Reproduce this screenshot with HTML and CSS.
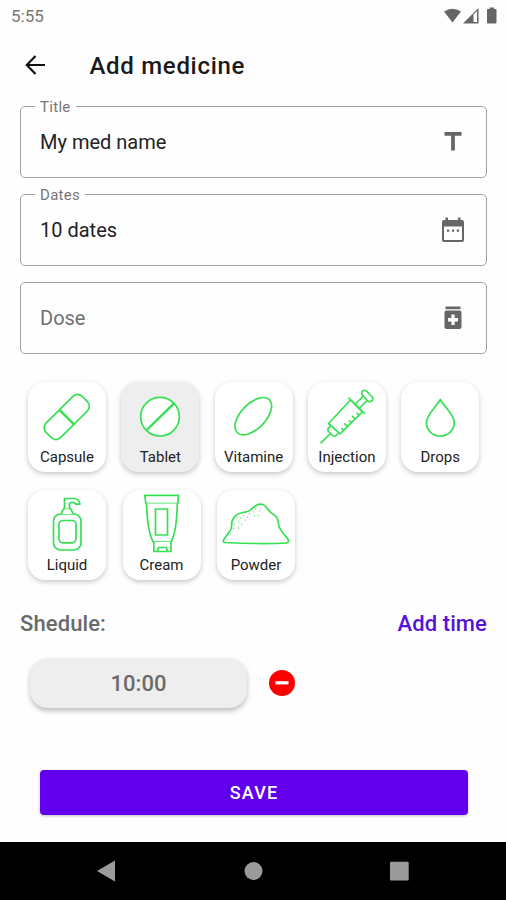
FILE: index.html
```
<!DOCTYPE html>
<html lang="en">

<head>
    <meta charset="UTF-8">
    <meta name="viewport" content="width=device-width, initial-scale=1.0">
    <title>Add medicine</title>
    <link rel="stylesheet" href="styles.css">
</head>

<body>
    <div class="status-bar">
        <span class="clock">5:55</span>
        <svg class="status-icons" width="56" height="18" viewBox="0 0 56 18">
            <path d="M1 4.5Q9.500-1 18 4.500L9.500 15.500Z" />
            <path d="M20 16.500L35.500 1V16.500Z" />
            <path class="signal-gap" d="M30.500 7.500L34 4V15H30.500Z" />
            <path d="M46.500 2V.5h4.500V2H52.500q1 0 1 1v12.500q0 1-1 1h-7.500q-1 0-1-1V3q0-1 1-1Z" />
        </svg>
    </div>

    <header class="app-bar">
        <svg class="back" width="22" height="22" viewBox="0 0 22 22">
            <path d="M20 11H2M10.500 2L1.800 11L10.500 20" />
        </svg>
        <h1>Add medicine</h1>
    </header>

    <main>
        <div class="field">
            <span class="field-label">Title</span>
            <span class="field-value">My med name</span>
            <svg width="26" height="26" viewBox="0 0 26 26">
                <path d="M4.500 3h17v3.800h-6.600V21.500h-3.800V6.800H4.500Z" />
            </svg>
        </div>
        <div class="field">
            <span class="field-label">Dates</span>
            <span class="field-value">10 dates</span>
            <svg width="26" height="26" viewBox="0 0 26 26">
                <path fill-rule="evenodd" d="M5.500.5h2.500v2.500h10V.5h2.500v2.500H22q2 0 2 2v18q0 2-2 2H4q-2 0-2-2V5q0-2 2-2h1.500ZM4 9.500V23h18V9.500Z" />
                <path d="M7 12.500h2.300v2.300H7ZM11.900 12.500h2.300v2.300h-2.300ZM16.800 12.500h2.300v2.300h-2.300Z" />
            </svg>
        </div>
        <div class="field">
            <span class="field-value placeholder">Dose</span>
            <svg width="26" height="26" viewBox="0 0 26 26">
                <path d="M5.500 1.500h15v2.700h-15Z" />
                <path fill-rule="evenodd" d="M6.500 5.500h13q2 0 2 2v14.500q0 2-2 2h-13q-2 0-2-2V7.500q0-2 2-2ZM11.400 9.500v3.600H8v3.400h3.400v3.600h3.300V16.500H18v-3.400h-3.300V9.500Z" />
            </svg>
        </div>

        <div class="types">
            <div class="type-card">
                <svg width="78" height="66" viewBox="0 0 78 66">
                    <g transform="rotate(-45 38.700 35)">
                        <rect x="13.200" y="24.800" width="51" height="20.500" rx="6.500" />
                        <path class="thick" d="M38.700 24.800v20.500" />
                    </g>
                </svg>
                <span>Capsule</span>
            </div>
            <div class="type-card selected">
                <svg width="78" height="66" viewBox="0 0 78 66">
                    <circle cx="39" cy="34.700" r="19.300" />
                    <path class="thick" d="M25.700 48L53 21.300" />
                </svg>
                <span>Tablet</span>
            </div>
            <div class="type-card">
                <svg width="78" height="66" viewBox="0 0 78 66">
                    <ellipse cx="38.300" cy="34.200" rx="23" ry="12.400" transform="rotate(-46 38.300 34.200)" />
                </svg>
                <span>Vitamine</span>
            </div>
            <div class="type-card">
                <svg width="78" height="66" viewBox="0 0 78 66">
                    <path d="M12.500 61.300L22.500 51.500M40.300 15.500L57 32" />
                    <path d="M22.500 44L20 46.500V49L25 54H27.500L30 51.500M20.500 41.500L42.500 18L54.300 30L32 51.800Z" />
                    <path d="M47.200 22L56 13.500M51.500 26L60.200 17.500" />
                    <path d="M54 9.500L56 8.300L58.500 9L64.700 15.500V18L62.500 19.700L60.200 19.300L53.700 12.500Z" />
                    <path d="M35.500 48.300L33.200 46M39.400 44.500L36.300 41.400M43.300 40.700L41 38.400M47.200 37L44.100 33.900M51 33.200L48.700 30.900" />
                </svg>
                <span>Injection</span>
            </div>
            <div class="type-card">
                <svg width="78" height="66" viewBox="0 0 78 66">
                    <path d="M39.300 17.500C35.500 24.500 25.300 33 25.300 40.500A14 13.500 0 0 0 53.300 40.500C53.300 33 43 24.500 39.300 17.500Z" />
                </svg>
                <span>Drops</span>
            </div>
        </div>

        <div class="types second">
            <div class="type-card">
                <svg width="78" height="66" viewBox="0 0 78 66">
                    <rect x="25.500" y="24" width="27.500" height="36" rx="7" />
                    <rect x="31" y="30.500" width="17" height="22.300" rx="4" />
                    <path d="M33.700 24C33.700 21 35 20.500 36 18.500H42.300C43.300 20.500 44.700 21 44.700 24" />
                    <path d="M36.500 18.500V8.500H45C49 8.500 51.500 10.500 52 14.200H47.800C46.500 12 43 12 41.500 13.500V18.500" />
                </svg>
                <span>Liquid</span>
            </div>
            <div class="type-card">
                <svg width="78" height="66" viewBox="0 0 78 66">
                    <path d="M21.800 5.300H55.500L54.800 13.500H22.800Z" />
                    <path d="M23.500 13.500C24 29 25.500 44 30.300 52H48C52.500 44 54 29 54.300 13.500" />
                    <path d="M32.500 19H44.500V45H32.500ZM30.800 52V61.500H48V52M34.500 61.500L35.500 57.500H43.500L44.500 61.500" />
                </svg>
                <span>Cream</span>
            </div>
            <div class="type-card">
                <svg width="78" height="66" viewBox="0 0 78 66">
                    <path d="M8 52.500C5.500 52.500 6 50.500 7.500 48.500L13 41C16 38 13.500 34 15.500 30C17.500 26 19.500 23.500 24 23C28 22 31 22.500 34 19.500C38 16 41.500 13 46 14.500C50 16 51 21 55 23.500C60 26 61 29 61.500 34C62 40 67 44 70.500 48.500C72 51 72 53 69.500 53C50 54 28 53.500 8 52.500Z" />
                    <path class="grains" d="M13 44h1M16 38.500h1M21 38h1M17 34h1M21 32h1M19 28h1M24 34h1M23 28h1M28 30h1M26 25.500h1M30 27h1M32 23.500h1M36 22h1M37 26h1M41 25.500h1M38 19h1M42 21h1" />
                </svg>
                <span>Powder</span>
            </div>
        </div>

        <div class="schedule-header">
            <h2>Shedule:</h2>
            <a class="add-time">Add time</a>
        </div>
        <div class="time-row">
            <div class="time">10:00</div>
            <svg width="26" height="26" viewBox="0 0 26 26">
                <circle cx="13" cy="13" r="13" />
                <path d="M6.500 11.200h13v3.200h-13Z" />
            </svg>
        </div>

        <button class="save">SAVE</button>
    </main>

    <nav class="nav-bar">
        <svg width="506" height="58" viewBox="0 0 506 58">
            <path d="M97 29L115 18.500V39.500Z" />
            <circle cx="253.500" cy="29" r="9" />
            <rect x="390" y="19.800" width="18.700" height="18.700" rx="1" />
        </svg>
    </nav>
</body>

</html>
```
FILE: styles.css
```
:root {
    --primary-color: #6200ee;
    --icon-green: #35e052;
    --grey-text: #6a6a6a;
    --border-color: #a3a3a3;
}

* {
    margin: 0;
    padding: 0;
    box-sizing: border-box;
}

body {
    width: 506px;
    height: 900px;
    display: flex;
    flex-direction: column;
    font-family: Roboto, "Liberation Sans", sans-serif;
    background-color: #fefefe;
    color: #222;
    overflow: hidden;
}

svg {
    display: block;
}

.status-bar {
    height: 30px;
    padding: 7px 8px 0 11px;
    display: flex;
    justify-content: space-between;
}

.clock {
    font-size: 17px;
    line-height: 18px;
    color: #777;
}

.status-icons {
    fill: #666;
    margin-right: -1px;
}

.status-icons .signal-gap {
    fill: #fefefe;
}

.app-bar {
    height: 70px;
    padding-left: 25px;
    display: flex;
    align-items: center;
    gap: 42.500px;
}

.back {
    fill: none;
    stroke: #111;
    stroke-width: 2.200;
}

h1 {
    padding-top: 1px;
    font-size: 24px;
    font-weight: 500;
    color: #1a1a1a;
    letter-spacing: 0.700px;
}

main {
    flex: 1;
    padding: 6px 19px 0 20px;
}

.field {
    position: relative;
    height: 72px;
    margin-bottom: 16px;
    padding: 0 20px 0 19px;
    border: 1.500px solid var(--border-color);
    border-radius: 5px;
    display: flex;
    align-items: center;
    justify-content: space-between;
}

.field svg {
    fill: #666;
}

/* sits on top of the border */
.field-label {
    position: absolute;
    top: -9px;
    left: 14px;
    padding: 0 5px;
    font-size: 15px;
    line-height: 18px;
    letter-spacing: 0.300px;
    color: #777;
    background-color: #fefefe;
}

.field-value {
    font-size: 20px;
    letter-spacing: 0;
}

.placeholder {
    color: #707070;
}

.types {
    display: flex;
    gap: 15.300px;
    margin: 28px 0 0 8px;
}

.types.second {
    gap: 16.500px;
    margin-top: 17.500px;
}

.type-card {
    width: 78px;
    height: 90px;
    border-radius: 17px;
    background-color: #fff;
    box-shadow: 0 2px 5px rgba(0, 0, 0, 0.220);
    text-align: center;
}

.type-card.selected {
    background-color: #eee;
}

.type-card svg {
    fill: #fff;
    stroke: var(--icon-green);
    stroke-width: 1.700;
    stroke-linejoin: round;
}

.type-card .thick {
    stroke-width: 2.400;
}

.type-card .grains {
    stroke-width: 1.200;
}

.type-card span {
    display: block;
    font-size: 15px;
    line-height: 18px;
}

.schedule-header {
    display: flex;
    justify-content: space-between;
    margin-top: 30.500px;
    line-height: 28px;
}

h2,
.add-time {
    font-size: 22px;
    font-weight: 500;
    color: var(--grey-text);
    letter-spacing: 0.100px;
}

.add-time {
    color: #5512d8;
}

.time-row {
    display: flex;
    align-items: center;
    gap: 22px;
    margin: 20px 0 0 10px;
}

.time {
    width: 217px;
    height: 50px;
    border-radius: 18px;
    background-color: #eee;
    box-shadow: 0 3px 5px rgba(0, 0, 0, 0.250);
    color: var(--grey-text);
    font-size: 22px;
    font-weight: 500;
    line-height: 51px;
    text-align: center;
}

.time-row circle {
    fill: #f00;
}

.time-row path {
    fill: #fff;
}

.save {
    display: block;
    width: 428px;
    height: 45px;
    margin: 62px 0 0 20px;
    border: none;
    border-radius: 4px;
    background-color: var(--primary-color);
    box-shadow: 0 1px 3px rgba(0, 0, 0, 0.250);
    color: #fff;
    font-family: inherit;
    font-size: 18px;
    font-weight: 500;
    letter-spacing: 1.200px;
}

.nav-bar {
    height: 58px;
    background-color: #000;
}

.nav-bar svg {
    fill: #9b9b9b;
}
```
